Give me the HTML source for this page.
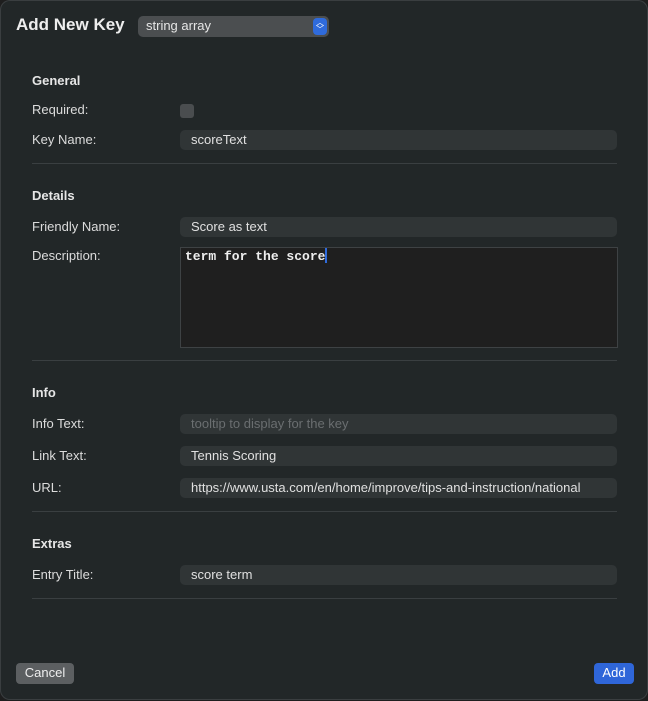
<!DOCTYPE html>
<html><head><style>
*{margin:0;padding:0;box-sizing:border-box}
body{width:648px;height:701px;background:#1e1e1e;font-family:"Liberation Sans",sans-serif;color:#dcdcdc;overflow:hidden;position:relative}
.win{position:absolute;left:0;top:0;width:648px;height:700px;background:#222728;box-shadow:inset 0 0 0 1px #3a3e40;border-radius:10px}
.a{position:absolute}
.lbl{position:absolute;left:32px;font-size:13px;color:#dcdcdc}
.h{position:absolute;left:32px;font-size:13px;font-weight:bold;color:#e6e6e6}
.f{position:absolute;left:180px;width:437px;height:20px;background:#303536;border-radius:5px;font-size:13px;padding:2px 0 0 11px;color:#e0e0e0;white-space:nowrap;overflow:hidden}
.sep{position:absolute;left:32px;width:585px;height:1px;background:#3a3f41}
</style></head><body>
<div class="win">
<div class="a" style="left:16px;top:15px;font-size:17px;font-weight:bold;color:#eee">Add New Key</div>
<div class="a" style="left:138px;top:16px;width:191px;height:21px;background:#4b4e50;border-radius:5px;font-size:13px;padding:2px 0 0 8px;color:#e6e6e6">string array
<div class="a" style="right:2px;top:2px;width:14px;height:17px;background:#2f6bdc;border-radius:4px;color:#fff;font-size:8px;line-height:7px;text-align:center;padding-top:1px">︿<br>﹀</div></div>

<div class="h" style="top:73px">General</div>
<div class="lbl" style="top:102px">Required:</div>
<div class="a" style="left:180px;top:104px;width:14px;height:14px;background:#4a4d4f;border-radius:3px"></div>
<div class="lbl" style="top:132px">Key Name:</div>
<div class="f" style="top:130px">scoreText</div>
<div class="sep" style="top:163px"></div>

<div class="h" style="top:188px">Details</div>
<div class="lbl" style="top:219px">Friendly Name:</div>
<div class="f" style="top:217px">Score as text</div>
<div class="lbl" style="top:248px">Description:</div>
<div class="a" style="left:180px;top:247px;width:438px;height:101px;background:#1f1f1f;border:1px solid #3e4244"></div>
<div class="a" style="left:185px;top:248px;font-family:'Liberation Mono',monospace;font-size:13px;color:#eee;font-weight:bold">term for the score<span style="display:inline-block;width:2px;height:15px;background:#2f6bdc;vertical-align:-3px"></span></div>
<div class="sep" style="top:360px"></div>

<div class="h" style="top:385px">Info</div>
<div class="lbl" style="top:416px">Info Text:</div>
<div class="f" style="top:414px;color:#6a6e70">tooltip to display for the key</div>
<div class="lbl" style="top:448px">Link Text:</div>
<div class="f" style="top:446px">Tennis Scoring</div>
<div class="lbl" style="top:480px">URL:</div>
<div class="f" style="top:478px">https://www.usta.com/en/home/improve/tips-and-instruction/national</div>
<div class="sep" style="top:511px"></div>

<div class="h" style="top:536px">Extras</div>
<div class="lbl" style="top:567px">Entry Title:</div>
<div class="f" style="top:565px">score term</div>
<div class="sep" style="top:598px"></div>

<div class="a" style="left:16px;top:663px;width:58px;height:21px;background:#5c5f61;border-radius:4px;font-size:13px;color:#eee;text-align:center;padding-top:2px">Cancel</div>
<div class="a" style="left:594px;top:663px;width:40px;height:21px;background:#2f66d9;border-radius:4px;font-size:13px;color:#fff;text-align:center;padding-top:2px">Add</div>
</div>
</body></html>
